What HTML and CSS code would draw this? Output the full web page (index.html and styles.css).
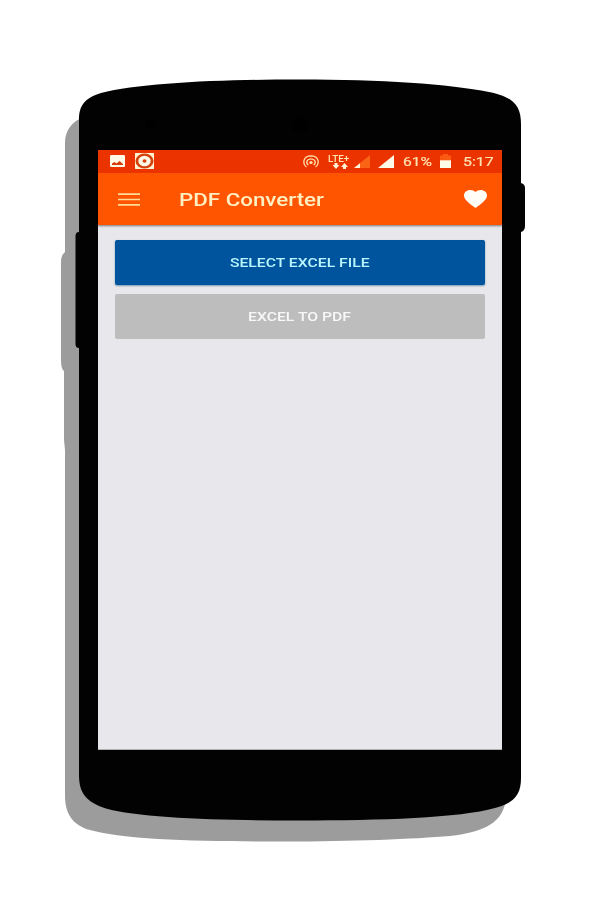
FILE: index.html
```html
<!DOCTYPE html>
<html lang="en">
<head>
<meta charset="utf-8">
<title>PDF Converter</title>
<link rel="stylesheet" href="styles.css">
</head>
<body>
<main class="stage">
  <svg class="device" viewBox="0 0 600 900" aria-hidden="true">
    <path class="device-shadow" d="M85 117C72 120 65 131 65 143V252Q61 255 61 262V360Q61 369 64 371V440L65 450V796C65 816 75 826 90 830C125 840 200 841.500 285 841.500C350 841.500 415 839 450 836C485 832 504 822 506 798V400H85Z"/>
    <path d="M79 120C79 105 85 98 101 93C140 83 220 79.500 300 79.500C380 79.500 450 84 489 92C513 97 521 105 521 124V183Q525 184 525 188V226Q525 231 521 232V778C521 795 514 803 495 808C460 818 380 820.500 300 820.500C220 820.500 140 818 106 808.500C86 802 79 793 79 775V348Q75.500 348 75.500 344V236Q75.500 232 79 232Z"/>
    <ellipse class="lens" cx="151" cy="124" rx="5" ry="4"/>
    <ellipse class="lens" cx="300" cy="125" rx="9" ry="8"/>
  </svg>
  <section class="screen">
    <header class="status">
      <svg class="photo" width="15" height="12" viewBox="0 0 15 12"><rect width="15" height="12" rx="1.200" fill="#fff9e8"/><path d="M2 10V8.500L4.500 7L6.500 8.500L9.500 6L13 9V10Z" fill="#d83a08"/></svg>
      <svg class="disc" width="19" height="16" viewBox="0 0 19 16"><rect width="19" height="16" fill="#fff0cf"/><ellipse cx="9.500" cy="8" rx="9" ry="7.500" fill="#d5410c"/><ellipse cx="9.500" cy="8" rx="6.200" ry="5.200" fill="#fff9e8"/><ellipse cx="9.500" cy="8" rx="2" ry="1.700" fill="#d5410c"/></svg>
      <svg class="hotspot" width="16" height="13" viewBox="0 0 16 13"><g fill="none" stroke="#ffdfa8" stroke-width="1.300"><path d="M3.500 12C-.8 9 -.2 1 8 .9C16.200 1 16.800 9 12.500 12"/><path d="M5.300 10C2.300 7.500 4 3.800 8 3.800C12 3.800 13.700 7.500 10.700 10"/></g><ellipse cx="8" cy="7.500" rx="1.700" ry="1.500" fill="#ffdfa8"/></svg>
      <div class="network">
        <span class="lte">LTE+</span>
        <svg class="arrows" width="16" height="6" viewBox="0 0 16 6"><path d="M2.500 0H5.500V2H7.500L4 6L.5 2H2.500ZM11 6H14V4H16L12.500 0L9 4H11Z" fill="#fff3d4"/></svg>
      </div>
      <svg class="signal-low" width="16" height="13" viewBox="0 0 16 13"><path d="M0 13L16 0V13Z" fill="#fb6415"/><path d="M0 13L6 8.200V13Z" fill="#fff6dc"/></svg>
      <svg class="signal" width="16" height="13" viewBox="0 0 16 13"><path d="M0 13L16 0V13Z" fill="#fffbe9"/></svg>
      <span class="percent">61%</span>
      <svg class="battery" width="11" height="14" viewBox="0 0 11 14"><path d="M3 0H8V1.500H11V7H0V1.500H3Z" fill="#fb5a12"/><path d="M0 6.300H11V14H0Z" fill="#fffbe9"/></svg>
      <span class="clock">5:17</span>
    </header>
    <nav class="toolbar">
      <svg class="menu" width="22" height="13" viewBox="0 0 22 13"><path d="M0 1.200H22M0 6.500H22M0 11.800H22" stroke="#ffdc98" stroke-width="1.700"/></svg>
      <h1 class="title">PDF Converter</h1>
      <svg class="heart" width="23" height="18" viewBox="2 3 20 18.350" preserveAspectRatio="none"><path d="M12 21.350l-1.450-1.320C5.400 15.360 2 12.280 2 8.500 2 5.420 4.420 3 7.500 3c1.740 0 3.410.81 4.500 2.090C13.090 3.810 14.760 3 16.500 3 19.580 3 22 5.420 22 8.500c0 3.780-3.400 6.860-8.550 11.540z" fill="#fffdf5"/></svg>
    </nav>
    <div class="content">
      <button class="btn primary"><span class="label-a">SELECT EXCEL FILE</span></button>
      <button class="btn disabled"><span class="label-b">EXCEL TO PDF</span></button>
    </div>
  </section>
</main>
</body>
</html>
```
FILE: styles.css
```css
* { box-sizing: border-box; }
body { margin: 0; background: #fff; font-family: Roboto, "Liberation Sans", sans-serif; }
.stage { position: relative; width: 600px; height: 900px; padding: 150px 98px; overflow: hidden; }
.device { position: absolute; inset: 0; width: 600px; height: 900px; fill: #020202; filter: blur(.4px); }
.device-shadow { fill: #9c9c9c; }
.lens { fill: #000; }
.screen { position: relative; width: 404px; height: 600px; background: #e8e7ec; border-bottom: 1px solid #aab0b0; }
.status { display: flex; height: 23px; padding-left: 12px; background: #eb3300; color: #ffe3b0; }
.status svg { display: block; flex: none; }
.status .photo { margin-top: 5px; }
.status .disc { margin: 3px 0 0 10px; }
.status .hotspot { margin: 5px 0 0 149px; }
.network { flex: none; width: 22px; margin: 5px 0 0 9px; }
.lte { display: block; height: 8px; font-size: 9.500px; line-height: 8px; font-weight: 500; white-space: nowrap; transform-origin: left; transform: scaleX(1.040); }
.status .arrows { margin: 0 0 0 4px; }
.status .signal-low { margin: 5px 0 0 4px; }
.status .signal { margin: 5px 0 0 8px; }
.percent, .clock { flex: none; font-size: 13px; line-height: 24px; white-space: nowrap; transform-origin: left; -webkit-text-stroke: .2px; }
.percent { width: 29px; margin-left: 9px; transform: scaleX(1.200); }
.status .battery { margin: 4px 0 0 8px; }
.clock { width: 30px; margin-left: 12px; transform: scaleX(1.220); }
.toolbar { display: flex; align-items: center; height: 52px; padding: 0 15px 0 20px; background: #ff5500; box-shadow: 0 1px 2px #77777c; clip-path: inset(0 0 -4px); }
.menu { flex: none; }
.title { flex: 1; margin: 2px 0 0 39px; color: #fff0c2; font-size: 19px; line-height: 24px; font-weight: 500; white-space: nowrap; transform-origin: left; transform: scaleX(1.175); }
.heart { flex: none; }
.content { display: flex; flex-direction: column; gap: 9px; padding: 15px 17px 0; }
.btn { display: flex; align-items: center; justify-content: center; width: 370px; height: 45px; padding: 0; border: 0; border-radius: 2px; font: 500 13px/20px Roboto, sans-serif; white-space: nowrap; }
.btn span { display: block; }
.primary { height: 45px; background: #00549d; color: #b9f6ff; box-shadow: 0 1px 2px #7697ad; }
.disabled { background: #bdbdbd; color: #f8f8f8; }
.label-a { transform: scaleX(1.210); }
.label-b { transform: scaleX(1.210); }
```
